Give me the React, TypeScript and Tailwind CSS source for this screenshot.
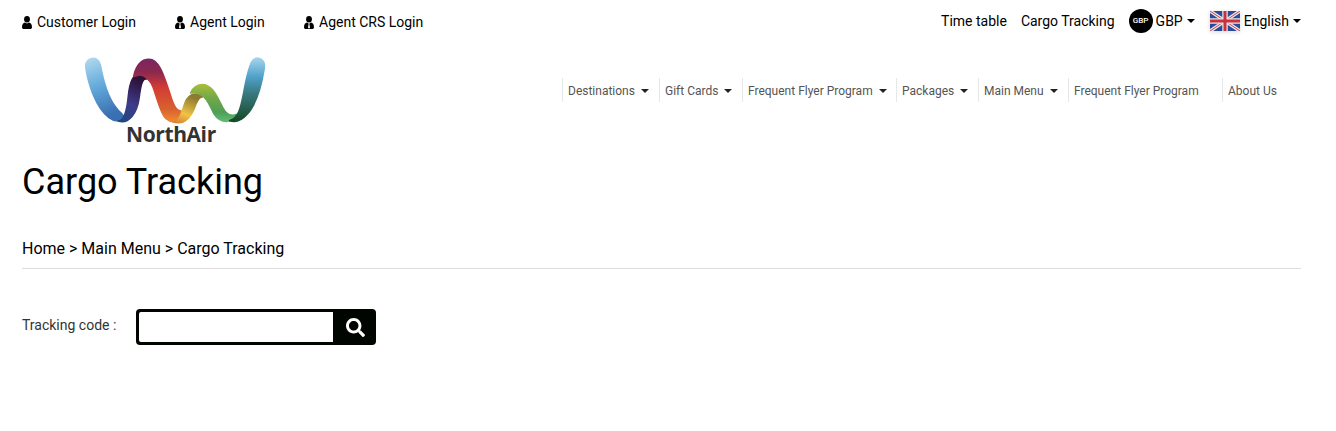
import { FaSearch } from "react-icons/fa";

const navItems = [
  { label: "Destinations", caret: true, width: "w-[97px]" },
  { label: "Gift Cards", caret: true, width: "w-[83px]" },
  { label: "Frequent Flyer Program", caret: true, width: "w-[154px]" },
  { label: "Packages", caret: true, width: "w-[82px]" },
  { label: "Main Menu", caret: true, width: "w-[90px]" },
  { label: "Frequent Flyer Program", caret: false, width: "w-[154px]" },
  { label: "About Us", caret: false, width: "w-[79px]" },
];

function Caret({ className = "" }: { className?: string }) {
  return (
    <span
      className={`inline-block h-0 w-0 border-x-4 border-t-4 border-x-transparent border-t-current ${className}`}
    />
  );
}

function PersonIcon({ tie = false }: { tie?: boolean }) {
  return (
    <svg viewBox="0 0 10 13" className="h-[13px] w-[10px] shrink-0" fill="currentColor">
      <ellipse cx="5" cy="3.2" rx="2.9" ry="3.2" />
      <path d="M0 11.2C0 8.4 1.4 6.9 3 6.6L5 7.4L7 6.6C8.6 6.9 10 8.4 10 11.2C10 12.4 9.2 13 8.2 13H1.8C0.8 13 0 12.4 0 11.2Z" />
      {tie && <path d="M4.3 7.2H5.7L5.4 8.2L6 11.6L5 12.7L4 11.6L4.6 8.2Z" fill="#ffffff" />}
    </svg>
  );
}

function Logo() {
  return (
    <div className="relative h-[88px] w-[180px]">
      <svg viewBox="0 0 540 264" className="h-[88px] w-[180px]">
        <defs>
          <linearGradient id="a" x1="0" y1="0" x2="0.25" y2="1">
            <stop offset="0" stopColor="#b2daf1" />
            <stop offset="0.5" stopColor="#62a9da" />
            <stop offset="1" stopColor="#3a6fb2" />
          </linearGradient>
          <linearGradient id="b" x1="0" y1="1" x2="0.3" y2="0">
            <stop offset="0" stopColor="#1c4a7c" />
            <stop offset="0.45" stopColor="#3f3b8c" />
            <stop offset="1" stopColor="#2c1238" />
          </linearGradient>
          <linearGradient id="c" x1="0" y1="0" x2="0" y2="1">
            <stop offset="0" stopColor="#7c2560" />
            <stop offset="0.2" stopColor="#8b2850" />
            <stop offset="0.45" stopColor="#d23b34" />
            <stop offset="0.8" stopColor="#d8612f" />
            <stop offset="1" stopColor="#ee8a34" />
          </linearGradient>
          <linearGradient id="d" x1="0" y1="1" x2="0.4" y2="0">
            <stop offset="0" stopColor="#d67f32" />
            <stop offset="0.4" stopColor="#f0c345" />
            <stop offset="1" stopColor="#8d7a32" />
          </linearGradient>
          <linearGradient id="e" x1="0" y1="0" x2="0" y2="1">
            <stop offset="0" stopColor="#a6bd3c" />
            <stop offset="0.35" stopColor="#74a947" />
            <stop offset="0.75" stopColor="#4f9e56" />
            <stop offset="1" stopColor="#62bb72" />
          </linearGradient>
          <linearGradient id="f" x1="0" y1="0" x2="0" y2="1">
            <stop offset="0" stopColor="#a4d3ec" />
            <stop offset="0.3" stopColor="#4fa1c8" />
            <stop offset="0.55" stopColor="#3a7a80" />
            <stop offset="1" stopColor="#154a28" />
          </linearGradient>
        </defs>
        {/* same coordinates as the 3x crop of the logo */}
        <g transform="translate(-28,-22)" strokeWidth="5" strokeLinejoin="round">
          <path
            d="M30 52C28 24 66 14 74 46C82 92 98 160 138 192L148 205C138 216 118 218 100 204C60 172 38 104 30 52Z"
            fill="url(#a)"
            stroke="url(#a)"
          />
          <path
            d="M128 214C148 214 154 180 158 140C162 100 170 72 200 72L212 88C198 84 194 116 190 146C184 190 160 224 128 214Z"
            fill="url(#b)"
            stroke="url(#b)"
          />
          <path
            d="M174 80C182 44 198 29 220 29C252 29 266 84 282 130C292 165 302 190 326 184L312 206C300 220 284 218 270 206C254 190 246 150 232 112C224 90 206 74 190 76Z"
            fill="url(#c)"
            stroke="url(#c)"
          />
          <path
            d="M292 216C314 216 318 186 328 160C336 138 350 130 370 134L380 142C368 140 362 158 356 176C342 208 320 226 292 216Z"
            fill="url(#d)"
            stroke="url(#d)"
          />
          <path
            d="M345 130C352 114 366 105 382 105C410 107 424 140 440 172C450 192 462 202 486 194L470 212C446 220 428 212 416 194C404 172 396 146 378 136C366 130 356 128 345 130Z"
            fill="url(#e)"
            stroke="url(#e)"
          />
          <path
            d="M462 213C490 206 496 170 504 130C510 96 516 68 524 46C532 14 570 22 566 54C558 104 542 166 512 196C498 212 480 218 462 213Z"
            fill="url(#f)"
            stroke="url(#f)"
          />
        </g>
      </svg>
      <span className="absolute left-[41px] top-[65px] font-['Open_Sans',sans-serif] text-[21px] leading-6 font-bold tracking-[-0.4px] text-[#333333]">
        NorthAir
      </span>
    </div>
  );
}

function UkFlag() {
  return (
    <svg viewBox="0 0 60 40" className="h-[20px] w-[30px] drop-shadow-sm">
      <rect width="60" height="40" fill="#2b4a98" />
      <path d="M0 0L60 40M60 0L0 40" stroke="#e9e4e6" strokeWidth="7" />
      <path d="M0 0L60 40M60 0L0 40" stroke="#cc4450" strokeWidth="2" />
      <path d="M30 0V40M0 20H60" stroke="#e9e4e6" strokeWidth="11" />
      <path d="M30 0V40M0 20H60" stroke="#c8323f" strokeWidth="6" />
    </svg>
  );
}

export default function App() {
  return (
    <div className="min-h-[431px] bg-white font-['Roboto',sans-serif] text-black">
      {/* Top bar */}
      <div className="flex h-[44px] items-center justify-between pl-[22px] pr-[35px] text-sm">
        <div className="flex items-center">
          <a className="flex w-[153px] items-center gap-[5px]">
            <PersonIcon />
            Customer Login
          </a>
          <a className="flex w-[129px] items-center gap-[5px]">
            <PersonIcon tie />
            Agent Login
          </a>
          <a className="flex items-center gap-[5px]">
            <PersonIcon tie />
            Agent CRS Login
          </a>
        </div>
        <div className="flex items-center pb-[2px]">
          <a className="mr-[14px]">Time table</a>
          <a className="mr-[14px]">Cargo Tracking</a>
          <span className="mr-[3px] flex h-[24px] w-[24px] items-center justify-center rounded-full bg-black text-[8px] font-medium text-white">
            GBP
          </span>
          <span>GBP</span>
          <Caret className="ml-[4px] mr-[15px]" />
          <UkFlag />
          <span className="ml-[4px]">English</span>
          <Caret className="ml-[4px]" />
        </div>
      </div>

      {/* Logo and main nav */}
      <div className="flex pl-[85px] pr-[35px] pt-[13px]">
        <Logo />
        <nav className="ml-auto mt-[21px] flex h-[24px] items-center text-xs text-[#555555]">
          {navItems.map((item, i) => (
            <a
              key={i}
              className={`flex h-full items-center border-l border-[#e7e7e7] pl-[5px] pt-[2px] ${item.width}`}
            >
              {item.label}
              {item.caret && <Caret className="ml-[6px] text-[#222222]" />}
            </a>
          ))}
        </nav>
      </div>

      {/* Page heading */}
      <div className="pl-[22px] pr-[35px]">
        <h1 className="mt-[15px] text-4xl leading-[44px] font-normal">Cargo Tracking</h1>
        <div className="mt-[33px] border-b border-[#dddddd] pb-[7px] text-base leading-6">
          Home &gt; Main Menu &gt; Cargo Tracking
        </div>

        {/* Tracking form */}
        <div className="mt-[40px] flex items-center">
          <label className="w-[114px] pb-[5px] text-sm text-[#333333]">Tracking code :</label>
          <div className="flex h-[36px] w-[240px] rounded-[4px] bg-[#000500] p-[3px] pr-0">
            <input className="h-full w-[194px] rounded-l-[2px] bg-white outline-none" />
            <button className="flex flex-1 items-center justify-center pl-[1px] text-white">
              <FaSearch className="h-[19px] w-[19px]" />
            </button>
          </div>
        </div>
      </div>
    </div>
  );
}
